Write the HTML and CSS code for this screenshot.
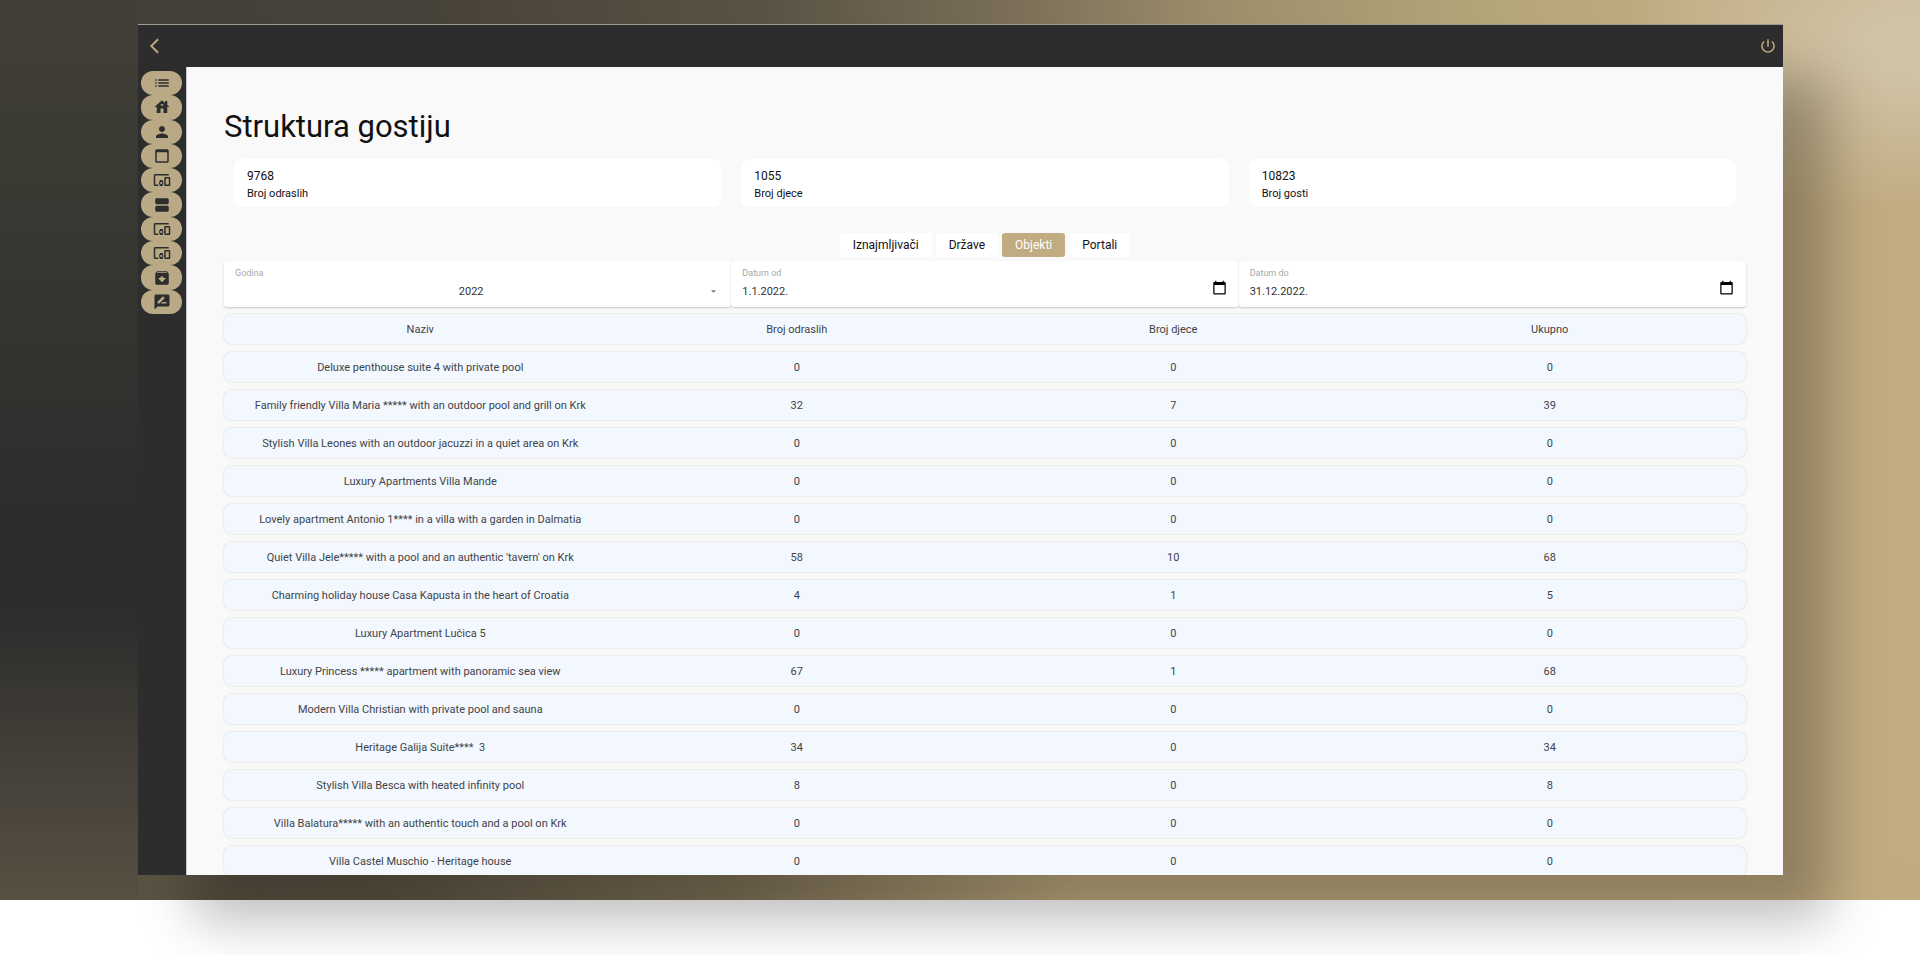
FILE: index.html
```html
<!DOCTYPE html>
<html lang="hr">
<head>
<meta charset="utf-8">
<title>Struktura gostiju</title>
<link rel="stylesheet" href="styles.css">
</head>
<body>
<section class="hero">
  <div class="window">
    <header class="topbar">
      <button class="icon-button" type="button" aria-label="Natrag"><svg class="icon" viewBox="0 0 24 24"><path d="M11.67 3.87L9.9 2.1 0 12l9.9 9.9 1.77-1.77L3.54 12z"/></svg></button>
      <button class="icon-button" type="button" aria-label="Odjava"><svg class="icon" viewBox="0 0 24 24"><path d="M13 3h-2v10h2V3zm4.83 2.17l-1.42 1.42C17.99 7.86 19 9.81 19 12c0 3.87-3.13 7-7 7s-7-3.13-7-7c0-2.19 1.01-4.14 2.58-5.42L6.17 5.17C4.23 6.82 3 9.26 3 12c0 4.97 4.03 9 9 9s9-4.03 9-9c0-2.74-1.23-5.18-3.17-6.83z"/></svg></button>
    </header>
    <div class="body">
      <nav class="sidebar" aria-label="Izbornik">
        <div class="menu">
          <button class="pill" type="button" aria-label="Popis"><svg class="icon" viewBox="0 0 24 24"><path d="M3 13h2v-2H3v2zm0 4h2v-2H3v2zm0-8h2V7H3v2zm4 4h14v-2H7v2zm0 4h14v-2H7v2zM7 7v2h14V7H7z"/></svg></button>
          <button class="pill" type="button" aria-label="Početna"><svg class="icon" viewBox="0 0 24 24"><path d="M19 9.3V4h-3v2.6L12 3 2 12h3v8h5v-6h4v6h5v-8h3l-3-2.7zM10 10c0-1.1.9-2 2-2s2 .9 2 2h-4z"/></svg></button>
          <button class="pill" type="button" aria-label="Korisnik"><svg class="icon" viewBox="0 0 24 24"><path d="M12 12c2.21 0 4-1.79 4-4s-1.79-4-4-4-4 1.79-4 4 1.79 4 4 4zm0 2c-2.67 0-8 1.34-8 4v2h16v-2c0-2.66-5.33-4-8-4z"/></svg></button>
          <button class="pill" type="button" aria-label="Kalendar"><svg class="icon" viewBox="0 0 24 24"><path d="M19 3H5c-1.11 0-2 .9-2 2v14c0 1.1.89 2 2 2h14c1.1 0 2-.9 2-2V5c0-1.1-.9-2-2-2zm0 16H5V7h14v12z"/></svg></button>
          <button class="pill" type="button" aria-label="Uređaji"><svg class="icon" viewBox="0 0 24 24"><path d="M3 6h18V4H3c-1.1 0-2 .9-2 2v12c0 1.1.9 2 2 2h4v-2H3V6zm10 6H9v1.78c-.61.55-1 1.33-1 2.22s.39 1.67 1 2.22V20h4v-1.78c.61-.55 1-1.34 1-2.22s-.39-1.67-1-2.22V12zm-2 5.500c-.83 0-1.5-.67-1.5-1.5s.67-1.5 1.5-1.5 1.5.67 1.5 1.5-.67 1.5-1.5 1.5zM22 8h-6c-.5 0-1 .5-1 1v10c0 .5.5 1 1 1h6c.5 0 1-.5 1-1V9c0-.5-.5-1-1-1zm-1 10h-4v-8h4v8z"/></svg></button>
          <button class="pill" type="button" aria-label="Pregled"><svg class="icon" viewBox="0 0 24 24"><path d="M19 13H5c-1.1 0-2 .9-2 2v4c0 1.1.9 2 2 2h14c1.1 0 2-.9 2-2v-4c0-1.1-.9-2-2-2zM19 3H5c-1.1 0-2 .9-2 2v4c0 1.1.9 2 2 2h14c1.1 0 2-.9 2-2V5c0-1.1-.9-2-2-2z"/></svg></button>
          <button class="pill" type="button" aria-label="Kanali"><svg class="icon" viewBox="0 0 24 24"><path d="M3 6h18V4H3c-1.1 0-2 .9-2 2v12c0 1.1.9 2 2 2h4v-2H3V6zm10 6H9v1.78c-.61.55-1 1.33-1 2.22s.39 1.67 1 2.22V20h4v-1.78c.61-.55 1-1.34 1-2.22s-.39-1.67-1-2.22V12zm-2 5.500c-.83 0-1.5-.67-1.5-1.5s.67-1.5 1.5-1.5 1.5.67 1.5 1.5-.67 1.5-1.5 1.5zM22 8h-6c-.5 0-1 .5-1 1v10c0 .5.5 1 1 1h6c.5 0 1-.5 1-1V9c0-.5-.5-1-1-1zm-1 10h-4v-8h4v8z"/></svg></button>
          <button class="pill" type="button" aria-label="Oprema"><svg class="icon" viewBox="0 0 24 24"><path d="M3 6h18V4H3c-1.1 0-2 .9-2 2v12c0 1.1.9 2 2 2h4v-2H3V6zm10 6H9v1.78c-.61.55-1 1.33-1 2.22s.39 1.67 1 2.22V20h4v-1.78c.61-.55 1-1.34 1-2.22s-.39-1.67-1-2.22V12zm-2 5.500c-.83 0-1.5-.67-1.5-1.5s.67-1.5 1.5-1.5 1.5.67 1.5 1.5-.67 1.5-1.5 1.5zM22 8h-6c-.5 0-1 .5-1 1v10c0 .5.5 1 1 1h6c.5 0 1-.5 1-1V9c0-.5-.5-1-1-1zm-1 10h-4v-8h4v8z"/></svg></button>
          <button class="pill" type="button" aria-label="Arhiva"><svg class="icon" viewBox="0 0 24 24"><path d="M20.54 5.23l-1.39-1.68C18.88 3.21 18.47 3 18 3H6c-.47 0-.88.21-1.16.55L3.46 5.23C3.17 5.57 3 6.02 3 6.5V19c0 1.1.9 2 2 2h14c1.1 0 2-.9 2-2V6.5c0-.48-.17-.93-.46-1.27zM12 17.5L6.5 12H10v-2h4v2h3.5L12 17.5zM5.12 5l.81-1h12l.94 1H5.12z"/></svg></button>
          <button class="pill" type="button" aria-label="Recenzije"><svg class="icon" viewBox="0 0 24 24"><path d="M20 2H4c-1.1 0-1.99.9-1.99 2L2 22l4-4h14c1.1 0 2-.9 2-2V4c0-1.1-.9-2-2-2zM6 14v-2.47l6.88-6.88c.2-.2.51-.2.71 0l1.77 1.77c.2.2.2.51 0 .71L8.47 14H6zm12 0h-7.5l2-2H18v2z"/></svg></button>
        </div>
      </nav>
      <main class="content">
        <h1 class="title">Struktura gostiju</h1>
        <div class="stats">
          <div class="stat"><div class="stat-value">9768</div><div class="stat-label">Broj odraslih</div></div>
          <div class="stat"><div class="stat-value">1055</div><div class="stat-label">Broj djece</div></div>
          <div class="stat"><div class="stat-value">10823</div><div class="stat-label">Broj gosti</div></div>
        </div>
        <div class="tabs">
          <button class="tab" type="button">Iznajmljivači</button>
          <button class="tab" type="button">Države</button>
          <button class="tab tab-active" type="button">Objekti</button>
          <button class="tab" type="button">Portali</button>
        </div>
        <form class="filters">
          <div class="field">
            <label class="field-label" for="year">Godina</label>
            <div class="field-row">
              <select class="control year" id="year"><option>2022</option></select>
              <svg class="caret" viewBox="0 0 6 3"><path d="M0 0h6L3 3z"/></svg>
            </div>
          </div>
          <div class="field">
            <label class="field-label" for="from">Datum od</label>
            <div class="field-row">
              <input class="control" id="from" type="text" value="1.1.2022.">
              <button class="picker" type="button" aria-label="Odaberi datum od"><svg class="calendar" viewBox="0 0 24 24"><path d="M20 3h-1V1h-2v2H7V1H5v2H4c-1.1 0-2 .9-2 2v16c0 1.1.9 2 2 2h16c1.1 0 2-.9 2-2V5c0-1.1-.9-2-2-2zm0 18H4V8h16v13z"/></svg></button>
            </div>
          </div>
          <div class="field">
            <label class="field-label" for="to">Datum do</label>
            <div class="field-row">
              <input class="control" id="to" type="text" value="31.12.2022.">
              <button class="picker" type="button" aria-label="Odaberi datum do"><svg class="calendar" viewBox="0 0 24 24"><path d="M20 3h-1V1h-2v2H7V1H5v2H4c-1.1 0-2 .9-2 2v16c0 1.1.9 2 2 2h16c1.1 0 2-.9 2-2V5c0-1.1-.9-2-2-2zm0 18H4V8h16v13z"/></svg></button>
            </div>
          </div>
        </form>
        <table class="guests">
          <thead>
            <tr><th>Naziv</th><th>Broj odraslih</th><th>Broj djece</th><th>Ukupno</th></tr>
          </thead>
          <tbody>
            <tr><td>Deluxe penthouse suite 4 with private pool</td><td>0</td><td>0</td><td>0</td></tr>
            <tr><td>Family friendly Villa Maria ***** with an outdoor pool and grill on Krk</td><td>32</td><td>7</td><td>39</td></tr>
            <tr><td>Stylish Villa Leones with an outdoor jacuzzi in a quiet area on Krk</td><td>0</td><td>0</td><td>0</td></tr>
            <tr><td>Luxury Apartments Villa Mande</td><td>0</td><td>0</td><td>0</td></tr>
            <tr><td>Lovely apartment Antonio 1**** in a villa with a garden in Dalmatia</td><td>0</td><td>0</td><td>0</td></tr>
            <tr><td>Quiet Villa Jele***** with a pool and an authentic 'tavern' on Krk</td><td>58</td><td>10</td><td>68</td></tr>
            <tr><td>Charming holiday house Casa Kapusta in the heart of Croatia</td><td>4</td><td>1</td><td>5</td></tr>
            <tr><td>Luxury Apartment Lučica 5</td><td>0</td><td>0</td><td>0</td></tr>
            <tr><td>Luxury Princess ***** apartment with panoramic sea view</td><td>67</td><td>1</td><td>68</td></tr>
            <tr><td>Modern Villa Christian with private pool and sauna</td><td>0</td><td>0</td><td>0</td></tr>
            <tr><td>Heritage Galija Suite**** &nbsp;3</td><td>34</td><td>0</td><td>34</td></tr>
            <tr><td>Stylish Villa Besca with heated infinity pool</td><td>8</td><td>0</td><td>8</td></tr>
            <tr><td>Villa Balatura***** with an authentic touch and a pool on Krk</td><td>0</td><td>0</td><td>0</td></tr>
            <tr><td>Villa Castel Muschio - Heritage house</td><td>0</td><td>0</td><td>0</td></tr>
          </tbody>
        </table>
      </main>
    </div>
  </div>
</section>
</body>
</html>
```
FILE: styles.css
```css
* {
  box-sizing: border-box;
}

body {
  margin: 0;
  height: 100vh;
  overflow: hidden;
  background: #ffffff;
  color: #111111;
  font-family: Roboto, "Liberation Sans", sans-serif;
}

button,
input,
select {
  margin: 0;
  padding: 0;
  border: 0;
  background: none;
  color: inherit;
  font: inherit;
}

.hero {
  height: calc(100vh - 55px);
  padding: 24px 137px 25px 138px;
  background:
    radial-gradient(ellipse 300px 170px at 100% 5%, #d0c2a5 20%, rgba(208, 194, 165, 0)),
    linear-gradient(180deg, #423f38 0%, #3d3c34 12%, #2d2d2d 56%, #2d2d2d 68%, #433f38 84%, #575042 100%) left / 138px 100% no-repeat,
    linear-gradient(90deg, #575042 0%, #5e5544 20%, #7f7258 38%, #bfaa7f 56%, #c1ab80 100%) bottom / 100% 40px no-repeat,
    linear-gradient(90deg, #423f38 0%, #474239 22%, #5a5344 40%, #7b6f59 53%, #9e8f6c 64%, #b5a679 78%, #c1ab80 88%);
}

.window {
  display: flex;
  flex-direction: column;
  height: 100%;
  border-top: 1px solid #a09c90;
  background: #2d2d2d;
  box-shadow: 50px 50px 50px -5px rgba(0, 0, 0, 0.26);
}

.topbar {
  display: flex;
  align-items: center;
  justify-content: space-between;
  flex: none;
  height: 42px;
  padding: 0 6px 0 12px;
  color: #c1ab80;
}

.icon-button {
  display: flex;
}

.icon {
  width: 18px;
  height: 18px;
  fill: currentColor;
}

.body {
  display: flex;
  flex: 1;
  min-height: 0;
}

.sidebar {
  flex: none;
  width: 48px;
  padding: 4px 4px 0 3px;
}

.menu {
  display: grid;
  grid-auto-rows: 1fr;
  height: 243px;
}

.pill {
  display: flex;
  align-items: center;
  justify-content: center;
  border-radius: 12px;
  background: #b9aa85;
  color: #2d2d2d;
}

.content {
  flex: 1;
  min-width: 0;
  overflow: hidden;
  padding: 40px 37px 0;
  border-left: 1px solid #c9c8d4;
  background: #f9f9f9;
}

.title {
  margin: 0;
  font-size: 31px;
  font-weight: 400;
  line-height: 40px;
}

.stats {
  display: grid;
  grid-template-columns: repeat(3, 1fr);
  gap: 20px;
  padding: 12px 10px 0;
}

.stat {
  height: 48px;
  padding: 9px 12px 0 13px;
  border-radius: 8px;
  background: #ffffff;
  font-size: 12px;
  line-height: 17px;
}

.stat-label {
  font-size: 11px;
}

.tabs {
  display: flex;
  justify-content: center;
  gap: 4px;
  padding-top: 26px;
}

.tab {
  height: 24px;
  padding: 0 13px;
  border-radius: 3px;
  background: #ffffff;
  font-size: 12px;
}

.tab-active {
  background: #c1ab80;
  color: #ffffff;
}

.filters {
  display: grid;
  grid-template-columns: repeat(3, 1fr);
  margin-top: 4px;
}

.field {
  height: 46px;
  padding: 6px 12px 0 11px;
  border-radius: 3px;
  background: #ffffff;
  box-shadow: 0 1px 2px rgba(0, 0, 0, 0.2);
}

.field-label {
  display: block;
  color: #a8a8a8;
  font-size: 9px;
  line-height: 12px;
}

.field-row {
  display: flex;
  align-items: center;
  height: 24px;
  color: #333333;
}

.control {
  flex: 1;
  min-width: 0;
  outline: 0;
  font-size: 11px;
}

.year {
  appearance: none;
  padding-right: 4px;
  text-align: center;
  text-align-last: center;
}

.caret {
  width: 5px;
  height: 3px;
  margin-right: 3px;
  fill: #777777;
}

.picker {
  display: flex;
  align-self: flex-start;
  padding-top: 1px;
  color: #000000;
}

.calendar {
  width: 15px;
  height: 15px;
  fill: currentColor;
}

.guests {
  display: flex;
  flex-direction: column;
  gap: 8px;
  margin-top: 7px;
  color: #3f4348;
  font-size: 11px;
}

.guests thead,
.guests tbody {
  display: flex;
  flex-direction: column;
  gap: 8px;
}

.guests tr {
  display: grid;
  grid-template-columns: repeat(4, 1fr);
  align-items: center;
  height: 30px;
  padding: 0 8px;
  border-radius: 8px;
  background: #f3f8fe;
  box-shadow: 0 0 2px rgba(0, 0, 0, 0.18);
}

.guests th,
.guests td {
  padding: 0;
  font-weight: 400;
  text-align: center;
}
```
